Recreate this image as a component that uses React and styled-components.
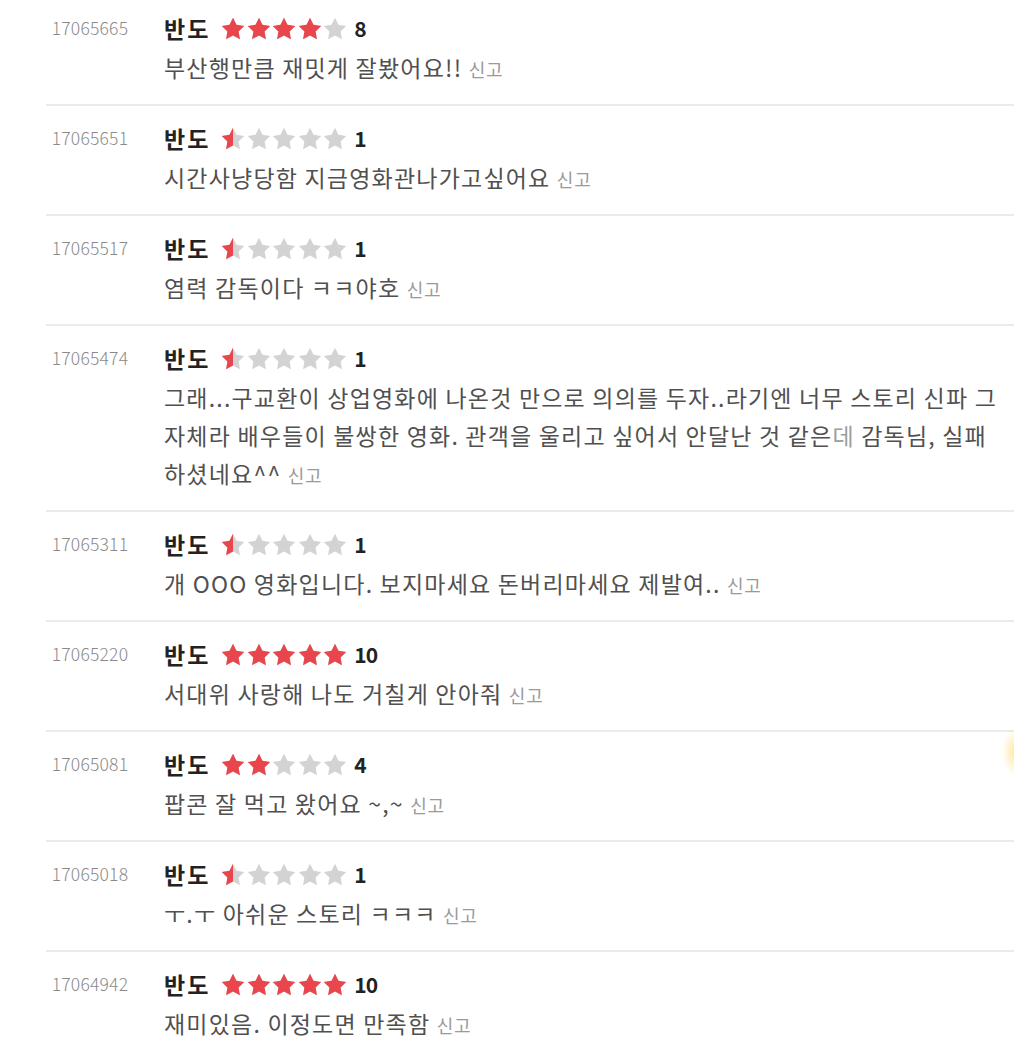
import React from 'react';
import styled, { createGlobalStyle } from 'styled-components';

const GlobalStyle = createGlobalStyle`
  html, body {
    margin: 0;
    padding: 0;
    background: #fff;
    overflow: hidden;
  }
  body {
    font-family: "Noto Sans CJK KR", "Noto Sans", sans-serif;
  }
`;

const Page = styled.div`
  position: relative;
  width: 1014px;
  height: 1045px;
  overflow: hidden;
`;

const List = styled.div`
  margin-top: -4px;
  margin-left: 46px;
`;

const Row = styled.div`
  display: flex;
  padding: 16px 0 18px;
  border-bottom: 2px solid #ebebeb;
`;

const IdCol = styled.div`
  flex: 0 0 88px;
  text-align: center;
  font-size: 17.5px;
  font-weight: 300;
  line-height: 32px;
  color: #8a8a8a;
  letter-spacing: 0.2px;
`;

const Body = styled.div`
  flex: 1;
  margin-left: 30px;
  min-width: 0;
`;

const Header = styled.div`
  display: flex;
  align-items: center;
  height: 32px;
  margin-bottom: 4px;
`;

const Name = styled.span`
  font-size: 23px;
  font-weight: 700;
  color: #222;
  letter-spacing: 2px;
  margin-right: 11px;
  line-height: 1;
`;

const StarRow = styled.span`
  display: flex;
  gap: 1.5px;
`;

const StarSvg = styled.svg`
  width: 24px;
  height: 23px;
  display: block;
`;

const Score = styled.span`
  margin-left: 7px;
  font-size: 21px;
  font-weight: 700;
  color: #222;
  letter-spacing: -1px;
  line-height: 1;
`;

const Text = styled.div`
  font-size: 23px;
  line-height: 38px;
  letter-spacing: 1.2px;
  word-break: keep-all;
  color: #505050;
`;

const Report = styled.span`
  font-size: 18px;
  line-height: 1;
  letter-spacing: 0.8px;
  white-space: nowrap;
  color: #9a9a9a;
`;

const Faded = styled.span`
  color: #9c9c9c;
`;

const Glow = styled.div`
  position: absolute;
  right: -14px;
  top: 728px;
  width: 26px;
  height: 48px;
  border-radius: 50%;
  background: radial-gradient(ellipse at center, rgba(255, 214, 80, 0.55), rgba(255, 230, 120, 0) 70%);
`;

const reviews = [
  { id: '17065665', score: 8, text: '부산행만큼 재밋게 잘봤어요!!' },
  { id: '17065651', score: 1, text: '시간사냥당함 지금영화관나가고싶어요' },
  { id: '17065517', score: 1, text: '염력 감독이다 ㅋㅋ야호' },
  {
    id: '17065474',
    score: 1,
    text: (
      <>
        그래...구교환이 상업영화에 나온것 만으로 의의를 두자..라기엔 너무 스토리 신파 그
        자체라 배우들이 불쌍한 영화. 관객을 울리고 싶어서 안달난 것 같은<Faded>데</Faded> 감독님, 실패
        하셨네요^^
      </>
    ),
  },
  { id: '17065311', score: 1, text: '개 OOO 영화입니다. 보지마세요 돈버리마세요 제발여..' },
  { id: '17065220', score: 10, text: '서대위 사랑해 나도 거칠게 안아줘' },
  { id: '17065081', score: 4, text: '팝콘 잘 먹고 왔어요 ~,~' },
  { id: '17065018', score: 1, text: 'ㅜ.ㅜ 아쉬운 스토리 ㅋㅋㅋ' },
  { id: '17064942', score: 10, text: '재미있음. 이정도면 만족함' },
];

// fat five-point star, inner radius half of outer
const STAR = Array.from({ length: 10 }, (_, k) => {
  const r = k % 2 === 0 ? 11.8 : 5.9;
  const a = (Math.PI / 5) * k - Math.PI / 2;
  return `${(12 + r * Math.cos(a)).toFixed(2)},${(12.6 + r * Math.sin(a)).toFixed(2)}`;
}).join(' ');

function Star({ fill, idx }) {
  const clip = `clip-${idx}`;
  return (
    <StarSvg viewBox="0 0 24 23">
      <defs>
        <clipPath id={clip}>
          <rect x="0" y="0" width={24 * fill} height="23" />
        </clipPath>
      </defs>
      <polygon points={STAR} fill="#d3d3d3" />
      {fill > 0 && <polygon points={STAR} fill="#e8464c" clipPath={`url(#${clip})`} />}
    </StarSvg>
  );
}

function Stars({ score, row }) {
  const filled = score / 2;
  return (
    <StarRow>
      {[0, 1, 2, 3, 4].map(i => {
        const f = Math.max(0, Math.min(1, filled - i));
        return <Star key={i} fill={f} idx={`${row}-${i}`} />;
      })}
    </StarRow>
  );
}

export default function App() {
  return (
    <Page>
      <GlobalStyle />
      <List>
        {reviews.map((r, i) => (
          <Row key={r.id}>
            <IdCol>{r.id}</IdCol>
            <Body>
              <Header>
                <Name>반도</Name>
                <Stars score={r.score} row={i} />
                <Score>{r.score}</Score>
              </Header>
              <Text>
                {r.text} <Report>신고</Report>
              </Text>
            </Body>
          </Row>
        ))}
      </List>
      <Glow />
    </Page>
  );
}
